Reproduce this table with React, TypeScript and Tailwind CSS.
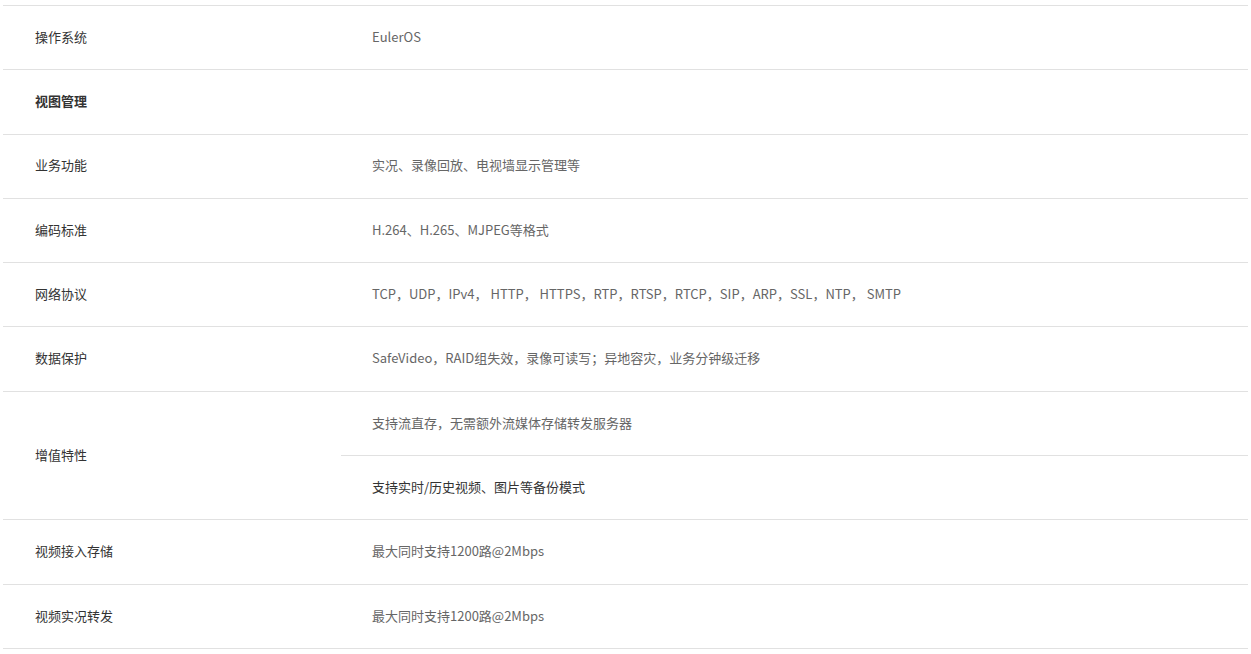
import React from 'react';

type Row = {
    label: string;
    values: string[];
    bold?: boolean;
    dark?: number[];
};

const rows: Row[] = [
    { label: '操作系统', values: ['EulerOS'] },
    { label: '视图管理', values: [''], bold: true },
    { label: '业务功能', values: ['实况、录像回放、电视墙显示管理等'] },
    { label: '编码标准', values: ['H.264、H.265、MJPEG等格式'] },
    { label: '网络协议', values: ['TCP，UDP，IPv4， HTTP， HTTPS，RTP，RTSP，RTCP，SIP，ARP，SSL，NTP， SMTP'] },
    { label: '数据保护', values: ['SafeVideo，RAID组失效，录像可读写；异地容灾，业务分钟级迁移'] },
    { label: '增值特性', values: ['支持流直存，无需额外流媒体存储转发服务器', '支持实时/历史视频、图片等备份模式'], dark: [1] },
    { label: '视频接入存储', values: ['最大同时支持1200路@2Mbps'] },
    { label: '视频实况转发', values: ['最大同时支持1200路@2Mbps'] },
];

export default function App() {
    return (
        <div className="min-h-screen bg-white pt-[5px] px-[3px]" style={{ fontFamily: '"Microsoft YaHei", "Noto Sans CJK SC", sans-serif' }}>
            <div className="border-t border-[#e1e1e1] text-[13px]">
                {rows.map((row) => (
                    <div key={row.label} className="flex border-b border-[#e1e1e1]">
                        <div className={`w-[338px] shrink-0 flex items-center pl-[32px] pb-[2px] text-[#333] ${row.bold ? 'font-bold' : ''}`}>
                            {row.label}
                        </div>
                        <div className="flex-1 flex flex-col">
                            {row.values.map((v, i) => (
                                <div
                                    key={i}
                                    className={`h-[63.3px] flex items-center pl-[31px] pb-[2px] ${i > 0 ? 'border-t border-[#e1e1e1] h-[64.3px]' : ''} ${row.dark?.includes(i) ? 'text-[#333]' : 'text-[#666]'}`}
                                >
                                    {v}
                                </div>
                            ))}
                        </div>
                    </div>
                ))}
            </div>
        </div>
    );
}
